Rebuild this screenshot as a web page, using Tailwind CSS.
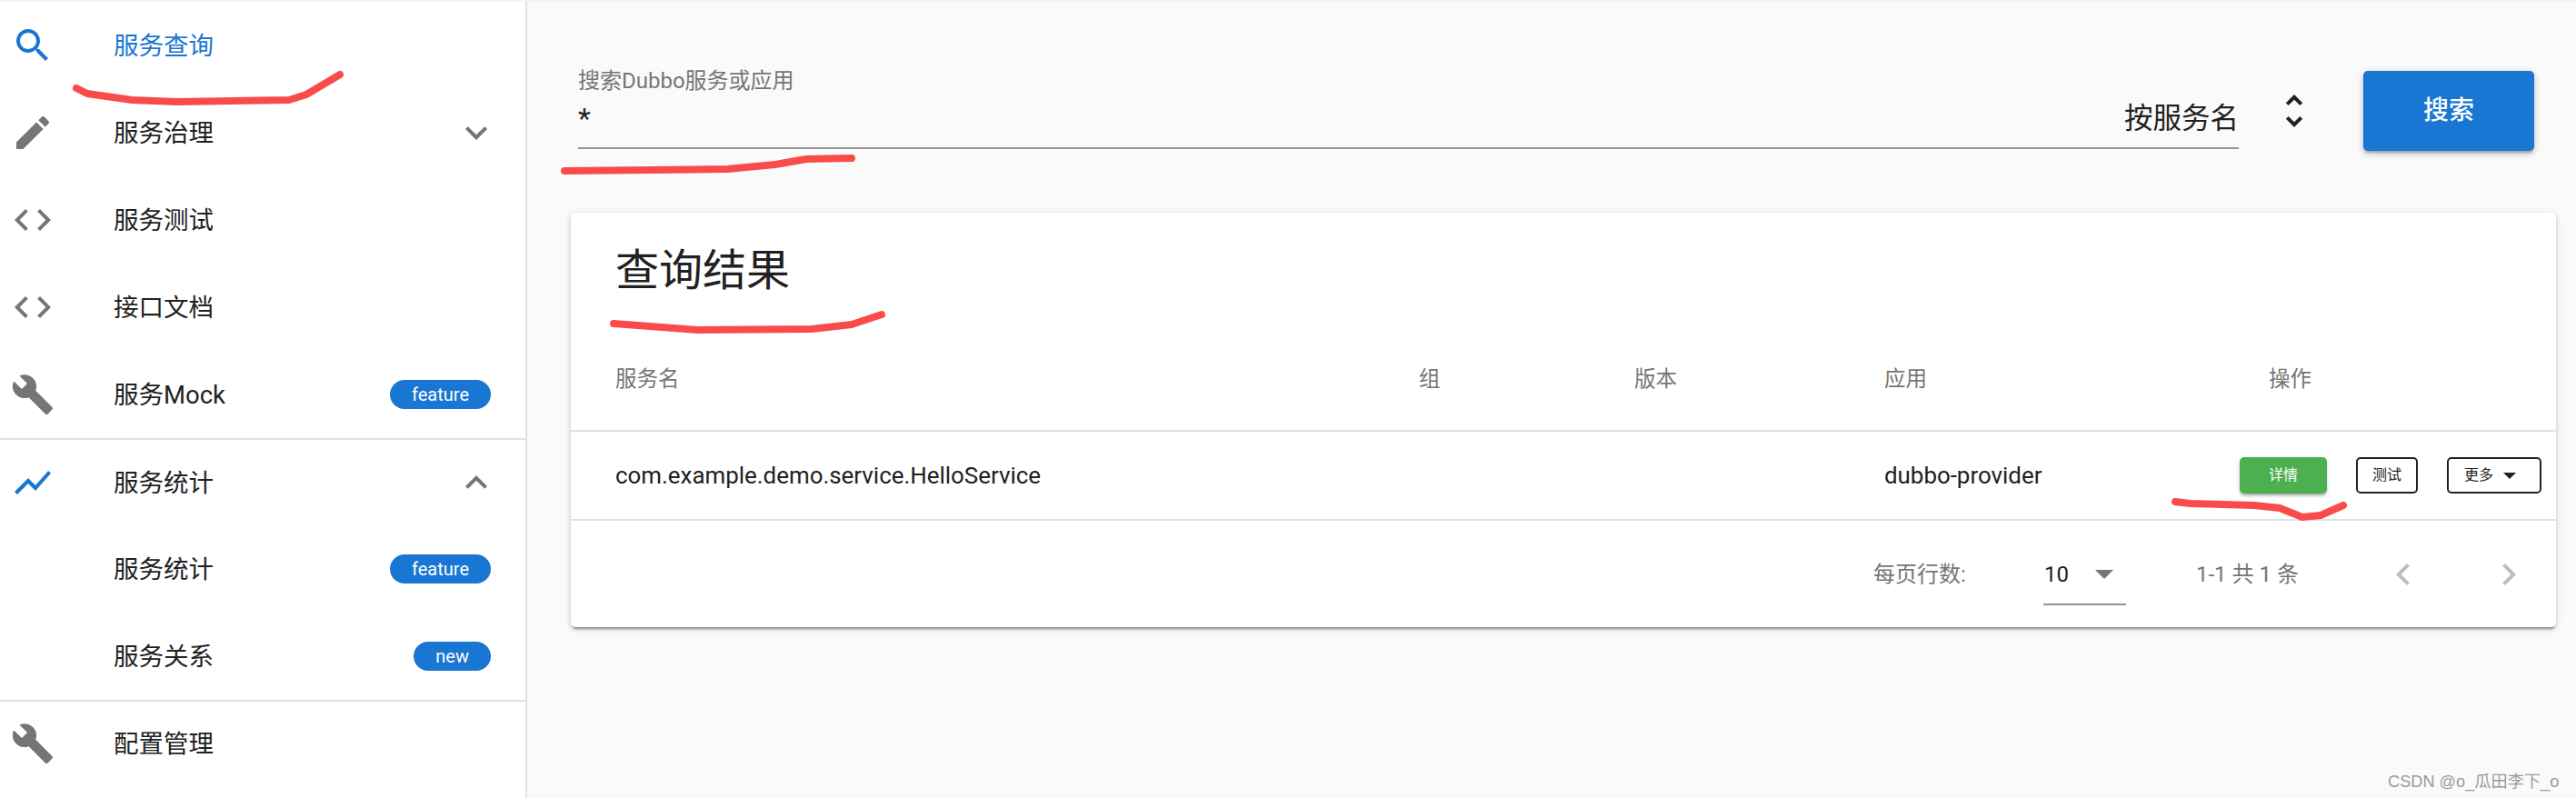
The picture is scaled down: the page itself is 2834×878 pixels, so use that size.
<!DOCTYPE html>
<html lang="zh-CN">
<head>
<meta charset="utf-8">
<title>服务查询</title>
<script src="https://cdn.jsdelivr.net/npm/@tailwindcss/browser@4"></script>
</head>
<body class="relative w-[2834px] h-[878px] overflow-hidden bg-[#fafafa] font-['Roboto','Noto_Sans_CJK_SC',sans-serif] text-[#212121]">
<div class="flex h-[878px]">

  <!-- sidebar -->
  <aside class="w-[580px] shrink-0 h-full bg-white border-r-2 border-[#e0e0e0] pt-[2px] text-[27.5px]">
    <div class="h-[96px] flex items-center pl-[12px] text-[#1976d2]">
      <svg class="w-[48px] h-[48px] fill-[#1976d2]" viewBox="0 0 24 24"><path d="M15.5 14h-.79l-.28-.27C15.41 12.59 16 11.11 16 9.5 16 5.91 13.09 3 9.5 3S3 5.91 3 9.5 5.91 16 9.5 16c1.61 0 3.09-.59 4.23-1.57l.27.28v.79l5 4.99L20.49 19l-4.99-5zm-6 0C7.01 14 5 11.99 5 9.5S7.01 5 9.5 5 14 7.01 14 9.5 11.99 14 9.5 14z"/></svg>
      <span class="ml-[65px] pt-[2px]">服务查询</span>
    </div>
    <div class="h-[96px] flex items-center pl-[12px] pr-[30px]">
      <svg class="w-[48px] h-[48px] fill-[#757575]" viewBox="0 0 24 24"><path d="M3 17.25V21h3.75L17.81 9.94l-3.75-3.75L3 17.25zM20.71 7.04c.39-.39.39-1.02 0-1.41l-2.34-2.34c-.39-.39-1.02-.39-1.41 0l-1.83 1.83 3.75 3.75 1.83-1.83z"/></svg>
      <span class="ml-[65px] pt-[2px]">服务治理</span>
      <svg class="ml-auto w-[48px] h-[48px] fill-[#757575]" viewBox="0 0 24 24"><path d="M16.59 8.59L12 13.17 7.41 8.59 6 10l6 6 6-6z"/></svg>
    </div>
    <div class="h-[96px] flex items-center pl-[12px]">
      <svg class="w-[48px] h-[48px] fill-[#757575]" viewBox="0 0 24 24"><path d="M9.4 16.6L4.8 12l4.6-4.6L8 6l-6 6 6 6 1.4-1.4zm5.2 0l4.6-4.6-4.6-4.6L16 6l6 6-6 6-1.4-1.4z"/></svg>
      <span class="ml-[65px] pt-[2px]">服务测试</span>
    </div>
    <div class="h-[96px] flex items-center pl-[12px]">
      <svg class="w-[48px] h-[48px] fill-[#757575]" viewBox="0 0 24 24"><path d="M9.4 16.6L4.8 12l4.6-4.6L8 6l-6 6 6 6 1.4-1.4zm5.2 0l4.6-4.6-4.6-4.6L16 6l6 6-6 6-1.4-1.4z"/></svg>
      <span class="ml-[65px] pt-[2px]">接口文档</span>
    </div>
    <div class="h-[96px] flex items-center pl-[12px] pr-[38px]">
      <svg class="w-[48px] h-[48px] fill-[#757575]" viewBox="0 0 24 24"><path d="M22.7 19l-9.1-9.1c.9-2.3.4-5-1.5-6.9-2-2-5-2.4-7.4-1.3L9 6 6 9 1.6 4.7C.4 7.1.9 10.1 2.9 12.1c1.9 1.9 4.6 2.4 6.9 1.5l9.1 9.1c.4.4 1 .4 1.4 0l2.3-2.3c.5-.4.5-1.1.1-1.4z"/></svg>
      <span class="ml-[65px] pt-[2px]">服务Mock</span>
      <span class="ml-auto h-[32px] px-[24px] rounded-full bg-[#1976d2] text-white text-[20px] flex items-center">feature</span>
    </div>
    <div class="h-[2px] bg-[#e0e0e0]"></div>
    <div class="h-[94px] flex items-center pl-[12px] pr-[30px]">
      <svg class="w-[48px] h-[48px] fill-[#1976d2]" viewBox="0 0 24 24"><path d="M3.5 18.49l6-6.01 4 4L22 6.92l-1.41-1.41-7.09 7.97-4-4L2 16.99z"/></svg>
      <span class="ml-[65px] pt-[2px]">服务统计</span>
      <svg class="ml-auto w-[48px] h-[48px] fill-[#757575]" viewBox="0 0 24 24"><path d="M12 8l-6 6 1.41 1.41L12 10.83l4.59 4.58L18 14z"/></svg>
    </div>
    <div class="h-[96px] flex items-center pl-[125px] pr-[38px]">
      <span class="pt-[2px]">服务统计</span>
      <span class="ml-auto h-[32px] px-[24px] rounded-full bg-[#1976d2] text-white text-[20px] flex items-center">feature</span>
    </div>
    <div class="h-[96px] flex items-center pl-[125px] pr-[38px]">
      <span class="pt-[2px]">服务关系</span>
      <span class="ml-auto h-[32px] px-[24px] rounded-full bg-[#1976d2] text-white text-[20px] flex items-center">new</span>
    </div>
    <div class="h-[2px] bg-[#e0e0e0]"></div>
    <div class="h-[92px] flex items-center pl-[12px]">
      <svg class="w-[48px] h-[48px] fill-[#757575]" viewBox="0 0 24 24"><path d="M22.7 19l-9.1-9.1c.9-2.3.4-5-1.5-6.9-2-2-5-2.4-7.4-1.3L9 6 6 9 1.6 4.7C.4 7.1.9 10.1 2.9 12.1c1.9 1.9 4.6 2.4 6.9 1.5l9.1 9.1c.4.4 1 .4 1.4 0l2.3-2.3c.5-.4.5-1.1.1-1.4z"/></svg>
      <span class="ml-[65px] pt-[2px]">配置管理</span>
    </div>
  </aside>

  <!-- main -->
  <main class="flex-1 pt-[72px]">
    <div class="flex items-start pl-[56px]">
      <div class="w-[1827px] h-[90px] border-b-2 border-[#949494] box-content">
        <div class="h-[34px] leading-[34px] text-[24px] text-[#757575]">搜索Dubbo服务或应用</div>
        <div class="flex h-[56px]">
          <span class="text-[32px] leading-[44px] pt-[2px]">*</span>
          <span class="ml-auto pt-[3px] text-[31.5px] leading-[44px]">按服务名</span>
        </div>
      </div>
      <svg class="ml-[37px] mt-[26px] w-[48px] h-[48px] fill-[#212121]" viewBox="0 0 24 24"><path d="M12 5.83L15.17 9l1.41-1.41L12 3 7.41 7.59 8.83 9 12 5.83zm0 12.34L8.83 15l-1.41 1.41L12 21l4.59-4.59L15.17 15 12 18.17z"/></svg>
      <button class="ml-[52px] mt-[6px] w-[188px] h-[88px] rounded-[5px] bg-[#1976d2] text-white text-[28px] font-medium shadow-[0_3px_2px_-1px_rgba(0,0,0,0.2),0_4px_6px_0_rgba(0,0,0,0.14),0_1px_10px_0_rgba(0,0,0,0.12)]">搜索</button>
    </div>

    <section class="mt-[68px] ml-[48px] w-[2184px] h-[456px] bg-white rounded-[5px] shadow-[0_4px_2px_-2px_rgba(0,0,0,0.3),0_2px_4px_0_rgba(0,0,0,0.14),0_2px_8px_0_rgba(0,0,0,0.12)]">
      <h2 class="h-[124px] pl-[49px] pt-[4px] flex items-center text-[48px] font-normal">查询结果</h2>
      <div class="h-[117px] border-b-2 border-[#e0e0e0] pl-[49px] pt-[5px] grid grid-cols-[884px_237px_275px_391px_1fr] items-center text-[23.5px] text-[#757575]">
        <span>服务名</span>
        <span>组</span>
        <span>版本</span>
        <span>应用</span>
        <span class="pl-[32px]">操作</span>
      </div>
      <div class="h-[98px] border-b-2 border-[#e0e0e0] pl-[49px] grid grid-cols-[884px_237px_275px_391px_1fr] items-center text-[25.9px]">
        <span>com.example.demo.service.HelloService</span>
        <span></span>
        <span></span>
        <span>dubbo-provider</span>
        <div class="flex items-center">
          <button class="w-[96px] h-[40px] rounded-[5px] bg-[#4caf50] text-white text-[16px] shadow-[0_3px_3px_-1px_rgba(0,0,0,0.25),0_2px_4px_0_rgba(0,0,0,0.14)]">详情</button>
          <button class="ml-[32px] w-[68px] h-[40px] rounded-[5px] border-2 border-[#212121] text-[16px]">测试</button>
          <button class="ml-[32px] w-[104px] h-[40px] rounded-[5px] border-2 border-[#212121] text-[16px] flex items-center pl-[17px]">更多<span class="ml-[11px] w-0 h-0 border-x-[7px] border-x-transparent border-t-[7px] border-t-[#212121]"></span></button>
        </div>
      </div>
      <div class="h-[117px] flex items-center justify-end pr-[28px] text-[24px] text-[#757575]">
        <span class="w-[109px] whitespace-nowrap">每页行数:</span>
        <div class="ml-[78px] w-[91px] h-[66px] mt-[2px] border-b-2 border-[#949494] flex items-center pl-[1px] pr-[14px] text-[24px] text-[#212121]">
          <span>10</span>
          <span class="ml-auto w-0 h-0 border-x-[10px] border-x-transparent border-t-[10px] border-t-[#757575]"></span>
        </div>
        <span class="ml-[77px] w-[111px] whitespace-nowrap">1-1 共 1 条</span>
        <svg class="ml-[93px] w-[48px] h-[48px] fill-[#bdbdbd]" viewBox="0 0 24 24"><path d="M15.41 7.41L14 6l-6 6 6 6 1.41-1.41L10.83 12z"/></svg>
        <svg class="ml-[68px] w-[48px] h-[48px] fill-[#bdbdbd]" viewBox="0 0 24 24"><path d="M10 6L8.59 7.41 13.17 12l-4.58 4.59L10 18l6-6z"/></svg>
      </div>
    </section>
  </main>
</div>

<!-- thin bar edge at the very top -->
<div class="absolute left-0 top-0 w-full h-[2px] bg-[#f4f4f4]"></div>

<!-- hand drawn marks on top of the screenshot -->
<svg class="absolute left-0 top-0 pointer-events-none" width="2834" height="878" fill="none" stroke="#f94c4a" stroke-width="8" stroke-linecap="round" stroke-linejoin="round">
  <path d="M84 97 L96 103 L145 110 L195 112 L318 110 L337 104 L364 88 L374 82"/>
  <path d="M621 188 L800 186 L853 181 L887 175 L937 174"/>
  <path d="M675 356 L767 363 L893 362 L937 357 L970 346"/>
  <path d="M2393 552 L2410 554 L2480 556 L2508 559 L2533 569 L2553 567 L2578 556"/>
</svg>

<div class="absolute left-[2627px] top-[848px] whitespace-nowrap text-[18.2px] leading-[24px] text-[#9a9a9a] font-['Liberation_Sans','Noto_Sans_CJK_SC',sans-serif]">CSDN @o_瓜田李下_o</div>
</body>
</html>
